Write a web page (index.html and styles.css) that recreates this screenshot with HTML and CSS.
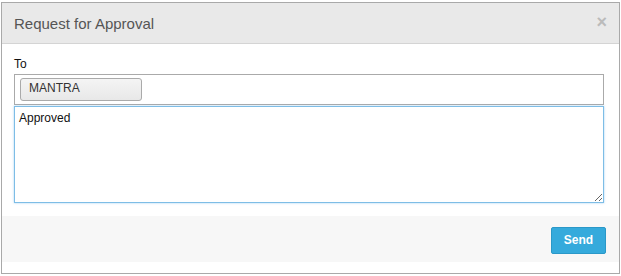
FILE: index.html
```html
<!DOCTYPE html>
<html>
<head>
<meta charset="utf-8">
<link rel="stylesheet" href="styles.css">
</head>
<body>
<div class="modal">
  <div class="modal-header">
    <span class="title">Request for Approval</span>
    <span class="close">×</span>
  </div>
  <div class="modal-body">
    <div class="label">To</div>
    <div class="to-box">
      <span class="token">MANTRA</span>
    </div>
    <textarea class="message">Approved</textarea>
  </div>
  <div class="modal-footer">
    <button class="send">Send</button>
  </div>
</div>
</body>
</html>
```
FILE: styles.css
```css
html, body {
  margin: 0;
  padding: 0;
  background: #fff;
  font-family: "Liberation Sans", Arial, sans-serif;
}
.modal {
  margin: 2px 0 0 1px;
  width: 619px;
  height: 272px;
  box-sizing: border-box;
  border: 1px solid #a9a9a9;
  background: #fff;
  display: flex;
  flex-direction: column;
}
.modal-header {
  height: 41px;
  box-sizing: border-box;
  background: #e9e9e9;
  border-bottom: 1px solid #d4d4d4;
  display: flex;
  align-items: center;
  justify-content: space-between;
  padding: 0 12px 0 12px;
}
.title {
  font-size: 15px;
  color: #555;
  margin-top: 0;
}
.close {
  font-size: 18px;
  font-weight: bold;
  color: #bbb;
  margin-top: -1px;
}
.modal-body {
  padding: 13px 15px 0 12px;
  height: 172px;
  box-sizing: border-box;
}
.label {
  font-size: 12px;
  color: #111;
  line-height: 14px;
  margin-bottom: 3px;
}
.to-box {
  height: 31px;
  box-sizing: border-box;
  border: 1px solid #aaa;
  padding: 3px 5px;
  margin-bottom: 1px;
}
.token {
  display: block;
  width: 122px;
  height: 23px;
  box-sizing: border-box;
  border: 1px solid #aaa;
  border-radius: 3px;
  background: linear-gradient(#f4f4f4, #e8e8e8);
  font-size: 12px;
  color: #333;
  line-height: 19px;
  padding-left: 8px;
}
.message {
  display: block;
  width: 590px;
  height: 97px;
  box-sizing: border-box;
  margin: 0;
  border: 1px solid #7ebde6;
  box-shadow: 0 0 2px rgba(102, 175, 233, 0.6);
  outline: none;
  padding: 4px 4px;
  font-family: "Liberation Sans", Arial, sans-serif;
  font-size: 12px;
  color: #111;
  resize: vertical;
}
.modal-footer {
  height: 46px;
  background: #f7f7f7;
  display: flex;
  align-items: center;
  justify-content: flex-end;
  padding-right: 13px;
}
.send {
  width: 55px;
  height: 27px;
  margin-top: 2px;
  background: #35aadc;
  border: 1px solid #2b98c8;
  border-radius: 2px;
  color: #fff;
  font-family: "Liberation Sans", Arial, sans-serif;
  font-size: 12px;
  font-weight: bold;
  padding: 0;
}
```
